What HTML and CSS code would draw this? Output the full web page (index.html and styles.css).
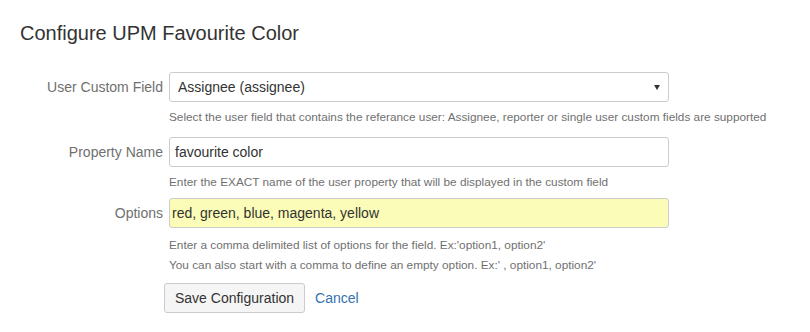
FILE: index.html
```html
<!DOCTYPE html>
<html lang="en">
<head>
    <meta charset="UTF-8">
    <title>Configure UPM Favourite Color</title>
    <link rel="stylesheet" href="styles.css">
</head>
<body>
    <div class="page">
        <h1>Configure UPM Favourite Color</h1>
        <form class="config-form">
            <div class="field-group first">
                <label for="user-field">User Custom Field</label>
                <div class="select-wrap">
                    <select id="user-field" class="text">
                        <option>Assignee (assignee)</option>
                    </select>
                    <span class="select-arrow"></span>
                </div>
                <div class="description">Select the user field that contains the referance user: Assignee, reporter or single user custom fields are supported</div>
            </div>
            <div class="field-group second">
                <label for="property-name">Property Name</label>
                <input id="property-name" class="text" type="text" value="favourite color">
                <div class="description">Enter the EXACT name of the user property that will be displayed in the custom field</div>
            </div>
            <div class="field-group third">
                <label for="options">Options</label>
                <input id="options" class="text highlight" type="text" value="red, green, blue, magenta, yellow">
                <div class="description">
                    Enter a comma delimited list of options for the field. Ex:'option1, option2'<br>
                    You can also start with a comma to define an empty option. Ex:' , option1, option2'
                </div>
            </div>
            <div class="buttons">
                <button type="button" class="button">Save Configuration</button>
                <a href="#" class="cancel">Cancel</a>
            </div>
        </form>
    </div>
</body>
</html>
```

FILE: styles.css
```css
/* base */
body {
    margin: 0;
    font-family: "Liberation Sans", Arial, sans-serif;
    font-size: 14px;
    color: #333;
    background-color: #fff;
}

.page {
    padding: 18px 20px 20px;
}

h1 {
    margin: 0 0 24px;
    font-size: 20px;
    line-height: 30px;
    font-weight: normal;
    color: #333;
}

/* form rows */
.field-group {
    display: grid;
    grid-template-columns: 143px 500px;
    column-gap: 6px;
}

.field-group.first {
    margin-bottom: 10px;
}

.field-group.second {
    margin-bottom: 6px;
}

.field-group label {
    grid-column: 1;
    text-align: right;
    line-height: 30px;
    color: #707070;
}

.field-group .text,
.field-group .select-wrap {
    grid-column: 2;
}

.text {
    box-sizing: border-box;
    width: 500px;
    height: 30px;
    margin: 0;
    padding: 0 5px;
    border: 1px solid #ccc;
    border-radius: 3px;
    background-color: #fff;
    font-family: inherit;
    font-size: 14px;
    color: #333;
}

.text.highlight {
    padding-left: 2px;
    background-color: #fbfcb7;
}

.select-wrap {
    position: relative;
}

select.text {
    appearance: none;
    -webkit-appearance: none;
    display: block;
    padding-left: 8px;
}

.select-arrow {
    position: absolute;
    top: 13px;
    right: 9px;
    width: 0;
    height: 0;
    border-left: 3px solid transparent;
    border-right: 3px solid transparent;
    border-top: 5px solid #333;
}

.description {
    grid-column: 2;
    margin-top: 5px;
    font-size: 11.8px;
    line-height: 20px;
    color: #707070;
    white-space: nowrap;
}

.field-group.third .description {
    margin-top: 7px;
}

/* buttons */
.buttons {
    display: flex;
    align-items: center;
    margin-top: 8px;
    padding-left: 144px;
}

.button {
    box-sizing: border-box;
    height: 30px;
    padding: 0 10px;
    border: 1px solid #ccc;
    border-radius: 3px;
    background-color: #f5f5f5;
    font-family: inherit;
    font-size: 14px;
    color: #333;
}

.cancel {
    margin-left: 10px;
    color: #3572b0;
    text-decoration: none;
}
```
